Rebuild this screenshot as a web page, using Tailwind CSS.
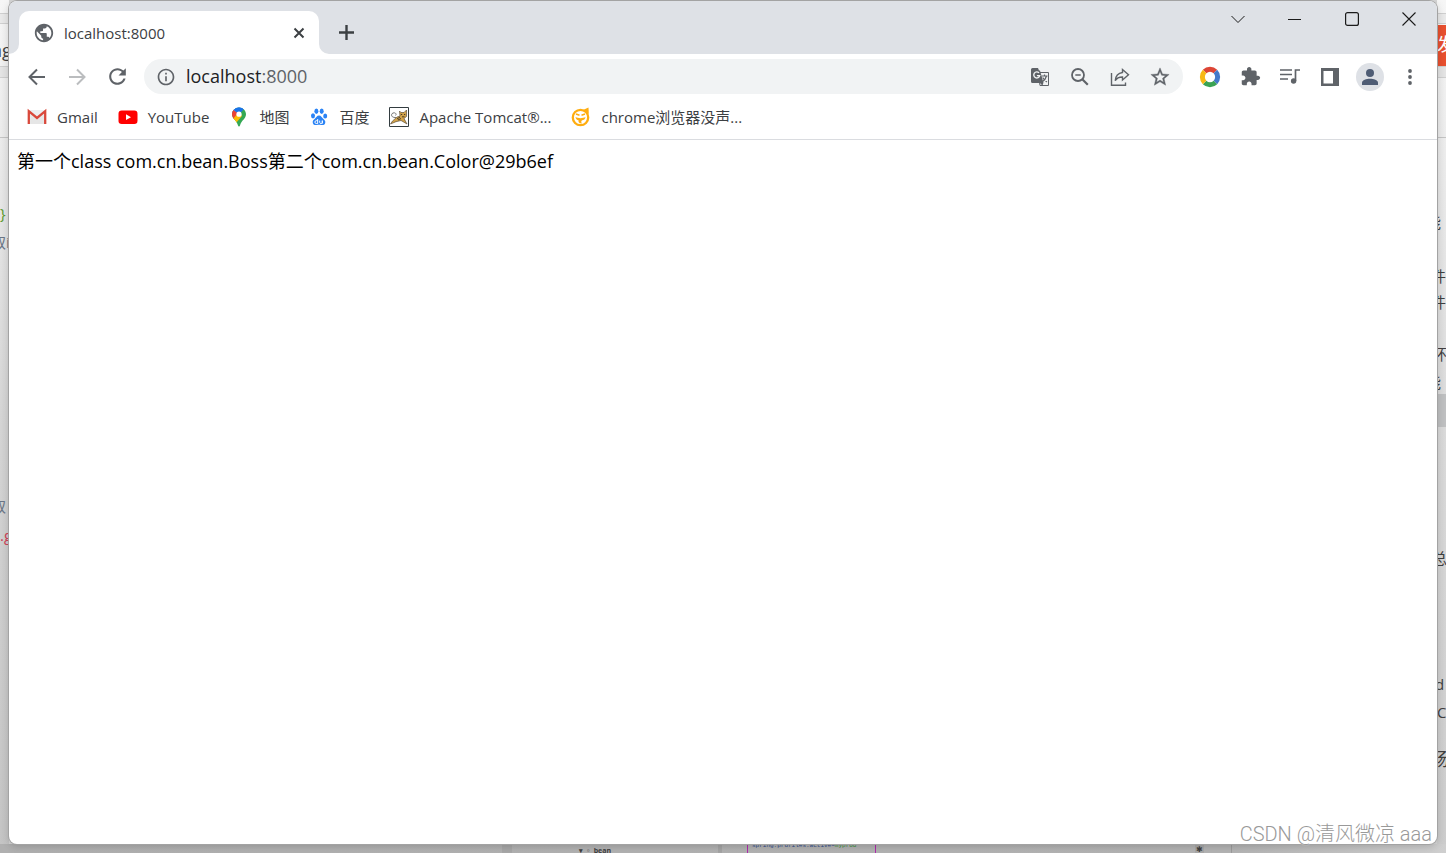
<!DOCTYPE html>
<html lang="zh-CN">
<head>
<meta charset="utf-8">
<title>localhost:8000</title>
<script src="https://cdn.jsdelivr.net/npm/@tailwindcss/browser@4"></script>
</head>
<body class="relative flex h-screen flex-col overflow-hidden bg-[#d6d6d6] px-[9px] pt-px pb-[9px] font-['Open_Sans','Noto_Sans_CJK_SC',sans-serif] text-[#3c4043]">

<!-- Windows lying behind the browser -->
<div aria-hidden="true" class="absolute inset-0 overflow-hidden text-[15px] leading-5 text-[#404040]">
  <div class="absolute inset-y-0 left-0 w-[9px] bg-linear-to-b from-[#f6f6f6] via-[#d4d4d4] via-50% to-[#c4c4c4]"></div>
  <div class="absolute inset-y-0 right-0 w-[9px] bg-linear-to-b from-[#f6f6f6] via-[#dadada] via-50% to-[#cccccc]"></div>
  <div class="absolute inset-x-0 top-[13px] h-[11px] border-y border-[#cfcfcf] bg-[#e9e9e9]"></div>
  <div class="absolute inset-x-0 top-[66px] h-[12px] border-y border-[#cfcfcf] bg-[#e4e4e4]"></div>
  <div class="absolute inset-x-0 top-[137px] h-px bg-[#c4c4c4]"></div>
  <div class="absolute top-0 left-[89px] h-px w-5 bg-[#555]"></div>
  <div class="absolute top-0 left-[283px] h-px w-2 bg-[#d9901a]"></div>
  <div class="absolute top-[36px] left-[-9px] text-lg">ng</div>
  <div class="absolute top-[203px] left-0 text-[#5a9a2c]">}</div>
  <div class="absolute top-[232px] left-[-9px] text-[#6b7686]">取i</div>
  <div class="absolute top-[496px] left-[-9px] text-[#6b7686]">取</div>
  <div class="absolute top-[525px] left-0 text-[#d0435a]">.g</div>
  <div class="absolute top-[25px] right-0 h-[41px] w-[9px] overflow-hidden bg-[#e8502f] text-lg leading-[38px] text-white"><span class="block">发</span></div>
  <div class="absolute top-[212px] left-full -ml-[20px]">能</div>
  <div class="absolute top-[266px] left-full -ml-[15px]">件</div>
  <div class="absolute top-[292px] left-full -ml-[15px]">件</div>
  <div class="absolute top-[344px] left-full -ml-[14px]">环</div>
  <div class="absolute top-[372px] left-full -ml-[20px]">能</div>
  <div class="absolute top-[394px] right-0 h-[33px] w-[9px] bg-[#bfc0c1]"></div>
  <div class="absolute top-[548px] left-full -ml-[14px]">总</div>
  <div class="absolute top-[674px] left-full -ml-[11px]">d</div>
  <div class="absolute top-[702px] left-full -ml-[9px]">C</div>
  <div class="absolute top-[749px] left-full -ml-[15px] text-lg leading-5">场</div>
  <div class="absolute inset-x-0 bottom-0 h-[9px] bg-linear-to-r from-[#b0b0b0] via-[#b4b4b4] via-85% to-[#cfcfcf]"></div>
  <div class="absolute bottom-0 left-[502px] h-[9px] w-[10px] bg-[#a8a8a8]"></div>
  <div class="absolute bottom-0 left-[718px] h-[9px] w-[4px] bg-[#a5a5a5]"></div>
  <div class="absolute top-[846px] left-[579px] text-[7px] leading-[10px] font-bold">▾ ▫ bean</div>
  <div class="absolute top-[840px] left-[747px] h-[13px] w-[129px] border-x border-[#b02aae] pl-1 font-['Liberation_Mono',monospace] text-[6px] leading-[12px] whitespace-nowrap text-[#2f4a8c]">spring.profiles.active=<span class="text-[#3b8f3b]">myprod</span></div>
  <div class="absolute bottom-0 left-[1195px] h-[9px] w-[9px] bg-[#a8a8a8]"></div>
  <div class="absolute top-[843px] left-[1196px] text-[8px] leading-[11px]">✱</div>
  <div class="absolute bottom-0 left-[1231px] h-[9px] w-px bg-[#9c9c9c]"></div>
</div>

<main class="relative flex min-h-0 flex-1 flex-col overflow-hidden rounded-lg bg-white shadow-[0_0_0_1px_#a3a3a3,0_2px_8px_rgba(0,0,0,0.2)]">

  <!-- Tab strip -->
  <header class="flex h-[53px] shrink-0 items-start justify-between bg-[#dee1e6]">
    <div class="flex items-start pt-[10px]">
      <svg class="mt-[33px] size-[10px] text-white" viewBox="0 0 10 10" fill="currentColor" aria-hidden="true"><path d="M10 0v10H0A10 10 0 0 0 10 0z"/></svg>
      <div class="flex h-[43px] w-[300px] items-center rounded-t-[10px] bg-white pr-[11px] pl-[14px]">
        <svg class="size-[22px] shrink-0 text-[#5f6368]" viewBox="0 0 24 24" fill="currentColor" aria-hidden="true"><path d="M12 2C6.480 2 2 6.480 2 12s4.480 10 10 10 10-4.480 10-10S17.520 2 12 2zm-1 17.930c-3.950-.49-7-3.850-7-7.930 0-.62.08-1.210.21-1.790L9 15v1c0 1.100.9 2 2 2v1.930zm6.900-2.540c-.26-.81-1-1.390-1.900-1.390h-1v-3c0-.55-.45-1-1-1H8v-2h2c.55 0 1-.45 1-1V7h2c1.100 0 2-.9 2-2v-.41c2.930 1.190 5 4.060 5 7.410 0 2.080-.8 3.970-2.100 5.390z"/></svg>
        <span class="ml-[9px] flex-1 text-[15px] leading-5">localhost:8000</span>
        <button class="grid size-[18px] place-items-center" aria-label="关闭标签页"><svg class="size-[12px]" viewBox="0 0 12 12" fill="none" stroke="#3c4043" stroke-width="2"><path d="M1.500 1.500l9 9M10.500 1.500l-9 9"/></svg></button>
      </div>
      <svg class="mt-[33px] size-[10px] text-white" viewBox="0 0 10 10" fill="currentColor" aria-hidden="true"><path d="M0 0v10h10A10 10 0 0 1 0 0z"/></svg>
      <button class="mt-1 grid h-[35px] w-[34px] place-items-center" aria-label="新标签页"><svg class="size-[15px]" viewBox="0 0 15 15" fill="none" stroke="#3c4043" stroke-width="2.400"><path d="M7.500 0v15M0 7.500h15"/></svg></button>
    </div>
    <div class="flex text-[#1b1b1b]">
      <button class="grid h-9 w-[57px] place-items-center" aria-label="搜索标签页"><svg class="size-[14px]" viewBox="0 0 14 14" fill="none" stroke="currentColor"><path d="M.5 4l6.500 6.500L13.500 4"/></svg></button>
      <button class="grid h-9 w-[57px] place-items-center" aria-label="最小化"><svg class="size-[14px]" viewBox="0 0 14 14" fill="none" stroke="currentColor"><path d="M0 7.500h13"/></svg></button>
      <button class="grid h-9 w-[57px] place-items-center" aria-label="最大化"><svg class="size-[14px]" viewBox="0 0 14 14" fill="none" stroke="currentColor" stroke-width="1.200"><rect x=".6" y=".6" width="12.800" height="12.800" rx="2"/></svg></button>
      <button class="grid h-9 w-[57px] place-items-center" aria-label="关闭"><svg class="size-[14px]" viewBox="0 0 14 14" fill="none" stroke="currentColor" stroke-width="1.100"><path d="M.5.5l13 13M13.500.5l-13 13"/></svg></button>
    </div>
  </header>

  <!-- Toolbar -->
  <nav class="flex h-[45px] shrink-0 items-center pr-[7px] pl-2 text-[#5f6368]" aria-label="工具栏">
    <button class="grid size-10 place-items-center" aria-label="后退"><svg class="size-[18px]" viewBox="0 0 18 18" fill="none" stroke="currentColor" stroke-width="2"><path d="M17 9H2M9 1.500L1.500 9 9 16.500"/></svg></button>
    <button class="grid size-10 place-items-center text-[#bbbdbf]" aria-label="前进" disabled><svg class="size-[18px]" viewBox="0 0 18 18" fill="none" stroke="currentColor" stroke-width="2"><path d="M1 9h15M9 1.500L16.500 9 9 16.500"/></svg></button>
    <button class="grid size-10 place-items-center" aria-label="重新加载"><svg class="size-[25px]" viewBox="0 0 24 24" fill="currentColor"><path d="M17.650 6.350C16.200 4.900 14.210 4 12 4c-4.420 0-7.990 3.580-7.990 8s3.570 8 7.990 8c3.730 0 6.840-2.550 7.730-6h-2.080c-.82 2.330-3.040 4-5.650 4-3.310 0-6-2.690-6-6s2.690-6 6-6c1.660 0 3.140.69 4.220 1.780L13 11h7V4l-2.350 2.350z"/></svg></button>
    <div class="ml-[7px] flex h-[35px] flex-1 items-center rounded-full bg-[#f1f3f4] pr-[3px] pl-3">
      <svg class="size-[20px] shrink-0" viewBox="0 0 24 24" fill="currentColor" aria-hidden="true"><path d="M11 7h2v2h-2zm0 4h2v6h-2zm1-9C6.480 2 2 6.480 2 12s4.480 10 10 10 10-4.480 10-10S17.520 2 12 2zm0 18c-4.410 0-8-3.590-8-8s3.590-8 8-8 8 3.590 8 8-3.590 8-8 8z"/></svg>
      <a href="http://localhost:8000" class="ml-[10px] flex-1 pb-px text-lg leading-6"><span class="text-[#202124]">localhost</span>:8000</a>
      <button class="grid size-10 place-items-center" aria-label="翻译此页"><svg class="size-[20px]" viewBox="0 0 20 20"><path d="M8 5.500h10.500v13H10z" fill="none" stroke="#5f6368"/><path d="M2.500 1H8l1 2.500h1L13.500 16H2.500A1.500 1.500 0 0 1 1 14.500v-12A1.500 1.500 0 0 1 2.500 1z" fill="#5f6368"/><path d="M9 5.900A3 3 0 1 0 9.700 8.600H6.900" fill="none" stroke="#f1f3f4" stroke-width="1.400"/><path d="M11.500 9h6M14.500 7.500V9M16.500 9c-.6 2.500-2.200 4.500-4.500 6M12.700 10.500c1 2 2.300 3.400 4.300 4.500" fill="none" stroke="#5f6368" stroke-width="1.200"/><path d="M10 16l2.500 2.700.8-2.700z" fill="#5f6368"/></svg></button>
      <button class="grid size-10 place-items-center" aria-label="缩放"><svg class="size-[18px]" viewBox="0 0 18 18" fill="none" stroke="currentColor" stroke-width="1.800"><circle cx="7" cy="7" r="6"/><path d="M11.300 11.300l5.500 5.500" stroke-width="2.200"/><path d="M4.300 7h5.400" stroke-width="1.600"/></svg></button>
      <button class="grid size-10 place-items-center" aria-label="分享此页"><svg class="size-[20px]" viewBox="0 0 20 20" fill="none" stroke="currentColor" stroke-width="1.400"><path d="M1.500 6v12.200h14V15.500"/><path d="M12.500 2.500l6 5.200-6 5.300v-3c-3.500 0-5.800 1-7.300 3.700.4-4.500 3-7.600 7.300-8.200z"/></svg></button>
      <button class="grid size-10 place-items-center" aria-label="为此标签页添加书签"><svg class="size-[22px]" viewBox="0 0 24 24" fill="currentColor" stroke="currentColor" stroke-width=".4"><path d="M22 9.240l-7.190-.62L12 2 9.190 8.630 2 9.240l5.460 4.730L5.820 21 12 17.270 18.180 21l-1.630-7.030L22 9.240zM12 15.400l-3.760 2.270 1-4.280-3.320-2.880 4.380-.38L12 6.100l1.710 4.040 4.380.38-3.320 2.880 1 4.280L12 15.400z"/></svg></button>
    </div>
    <div class="ml-[7px] flex">
      <button class="grid size-10 place-items-center" aria-label="Google"><svg class="size-[22px]" viewBox="0 0 22 22" fill="none" stroke-width="5"><path d="M5.600 5.600a7.640 7.640 0 0 1 10.800 0" stroke="#dd4535"/><path d="M16.400 5.600a7.640 7.640 0 0 1 0 10.800" stroke="#4479c9"/><path d="M16.400 16.400a7.640 7.640 0 0 1-10.800 0" stroke="#3ba354"/><path d="M5.600 16.400a7.640 7.640 0 0 1 0-10.800" stroke="#f7b916"/></svg></button>
      <button class="grid size-10 place-items-center" aria-label="扩展程序"><svg class="size-[21px]" viewBox="0 0 24 24" fill="currentColor"><path d="M20.500 11H19V7c0-1.100-.9-2-2-2h-4V3.500C13 2.120 11.880 1 10.500 1S8 2.120 8 3.500V5H4c-1.100 0-1.990.9-1.990 2v3.800H3.500c1.490 0 2.700 1.210 2.700 2.700s-1.210 2.700-2.700 2.700H2V20c0 1.100.9 2 2 2h3.800v-1.500c0-1.490 1.210-2.700 2.700-2.700 1.490 0 2.700 1.210 2.700 2.700V22H17c1.100 0 2-.9 2-2v-4h1.500c1.380 0 2.500-1.120 2.500-2.500S21.880 11 20.500 11z"/></svg></button>
      <button class="grid size-10 place-items-center" aria-label="媒体控件"><svg class="size-[20px]" viewBox="0 0 20 20" fill="none" stroke="currentColor" stroke-width="1.700"><path d="M0 3h12M0 7.500h12M0 12h8M15.500 14V3H20"/><circle cx="13.600" cy="14" r="2.700" fill="currentColor" stroke="none"/></svg></button>
      <button class="grid size-10 place-items-center" aria-label="侧边栏"><svg class="size-[18px]" viewBox="0 0 18 18" fill="currentColor" fill-rule="evenodd"><path d="M0 0h18v18H0zM2.500 3v12.500h9.500V3z"/></svg></button>
      <button class="grid size-10 place-items-center" aria-label="个人资料"><span class="grid size-7 place-items-center rounded-full bg-[#dee1e6]"><svg class="size-4" viewBox="0 0 16 16" fill="#4f5d75"><circle cx="8" cy="4" r="4"/><path d="M0 16v-2.500C0 11 4.500 9.700 8 9.700s8 1.300 8 3.800V16z"/></svg></span></button>
      <button class="grid size-10 place-items-center" aria-label="自定义及控制"><svg class="size-[18px]" viewBox="0 0 18 18" fill="currentColor"><circle cx="9" cy="3" r="1.900"/><circle cx="9" cy="9" r="1.900"/><circle cx="9" cy="15" r="1.900"/></svg></button>
    </div>
  </nav>

  <!-- Bookmarks bar -->
  <nav class="flex h-[41px] shrink-0 items-center gap-5 border-b border-[#dadce0] pb-[5px] pl-[18px] text-[15px] leading-5 whitespace-nowrap" aria-label="书签栏">
    <a href="#" class="flex items-center gap-[10px]"><svg class="size-5" viewBox="0 0 20 20"><path d="M1 3h18v14H1z" fill="#eceff1"/><path d="M3.200 17V5.500L10 11l6.800-5.500V17" fill="#e6e6e6"/><path d="M1.800 17V4.200L10 11l8.200-6.800V17" fill="none" stroke="#d9483b" stroke-width="2.300"/></svg>Gmail</a>
    <a href="#" class="flex items-center gap-[10px]"><svg class="size-5" viewBox="0 0 20 20"><rect x=".5" y="3.500" width="19" height="13.500" rx="3.200" fill="#f00"/><path d="M8 7.300v5.800l5-2.900z" fill="#fff"/></svg>YouTube</a>
    <a href="#" class="flex items-center gap-[10px]"><svg class="size-5" viewBox="0 0 20 20"><clipPath id="pin"><path d="M10 .5c3.900 0 7 3 7 6.800 0 4.700-4.700 6-6 11.200-.3 1.300-1.700 1.300-2 0C7.700 13.300 3 12 3 7.300 3 3.500 6.100.5 10 .5z"/></clipPath><g clip-path="url(#pin)"><path d="M0 0h20v20H0z" fill="#34a853"/><path d="M10 7L20-4H0v9z" fill="#4285f4"/><path d="M0 0l10 7-6.500 7H0z" fill="#ea4335"/><path d="M2 14l8-9 3 4-6.500 7.500z" fill="#fbbc04"/><path d="M6.500 0L18-1l-8 8-5-4z" fill="#1a73e8"/></g><circle cx="10" cy="7.200" r="2.600" fill="#fff"/></svg>地图</a>
    <a href="#" class="flex items-center gap-[10px]"><svg class="size-5" viewBox="0 0 20 20" fill="#2a83f5"><ellipse cx="4" cy="8.800" rx="2" ry="2.600"/><ellipse cx="7.400" cy="4.300" rx="2" ry="2.700"/><ellipse cx="12.700" cy="4.300" rx="2" ry="2.700"/><ellipse cx="16.200" cy="9" rx="2" ry="2.500"/><path d="M10 8.500c2.200 0 2.800 2 4.200 3.300 1.500 1.300 2.500 2.300 2 4.200-.5 2-2.300 2.300-4 2-1.500-.2-3-.2-4.400 0-1.700.3-3.500 0-4-2s.5-2.900 2-4.200C7.200 10.500 7.800 8.500 10 8.500z"/><path d="M8.700 12v4.500H7.300a1.300 1.300 0 0 1 0-2.800h1.400M10.700 13.600v2c0 1.200 2.600 1.200 2.600 0v-2 3" fill="none" stroke="#fff"/></svg>百度</a>
    <a href="#" class="flex items-center gap-[10px]"><svg class="size-5" viewBox="0 0 20 20"><path d="M.5.5h19v19H.5z" fill="#fff" stroke="#333c40"/><path d="M10.500 4l1.500 1.500h3L17.500 3v6.500L15 11.500l3 5.500-6-3.500-5 1.200L1.500 17l2-3 4.500-4 3-1z" fill="#d1a24a" stroke="#4b4030" stroke-width=".6"/><path d="M7 10.500C2 11 1.500 7 4 6s4 1.500 2.500 2.500" fill="none" stroke="#777"/><path d="M12 7.500h1.200M15 7.500h1.200M13 9.800h2.500M8 12l3-2M9 13l3-1.500" stroke="#3b3020" stroke-width=".9"/></svg>Apache Tomcat®...</a>
    <a href="#" class="flex items-center gap-[10px]"><svg class="size-5" viewBox="0 0 20 20"><circle cx="9.500" cy="10.500" r="7.700" fill="#fff" stroke="#ffad0f" stroke-width="2.300"/><path d="M12 3l5.500-2.500L17.800 7z" fill="#ffad0f"/><path d="M5 7l3.500 1.300M10.500 8.300L14 7" stroke="#ffad0f" stroke-width="1.600"/><path d="M4.500 10c2.500 1.500 7.500 1.500 10 0-.3 2.500-1.800 3-3.300 3.200-1 .3-1.200 1.600-.4 3.300-2.800-.3-3.600-1.500-3.300-3.300-1.700-.2-2.800-1.200-3-3.200z" fill="#ffad0f"/></svg>chrome浏览器没声...</a>
  </nav>

  <!-- Page content -->
  <section class="flex-1 px-2 pt-[9px] text-lg leading-6 text-black">
    <p>第一个class com.cn.bean.Boss第二个com.cn.bean.Color@29b6ef</p>
  </section>
</main>

<div class="absolute right-[14px] bottom-[5px] font-[Roboto,'Noto_Sans_CJK_SC',sans-serif] text-[20px] leading-7 font-light text-[#999] [text-shadow:0_0_1px_#fff]">CSDN @清风微凉 aaa</div>
</body>
</html>
